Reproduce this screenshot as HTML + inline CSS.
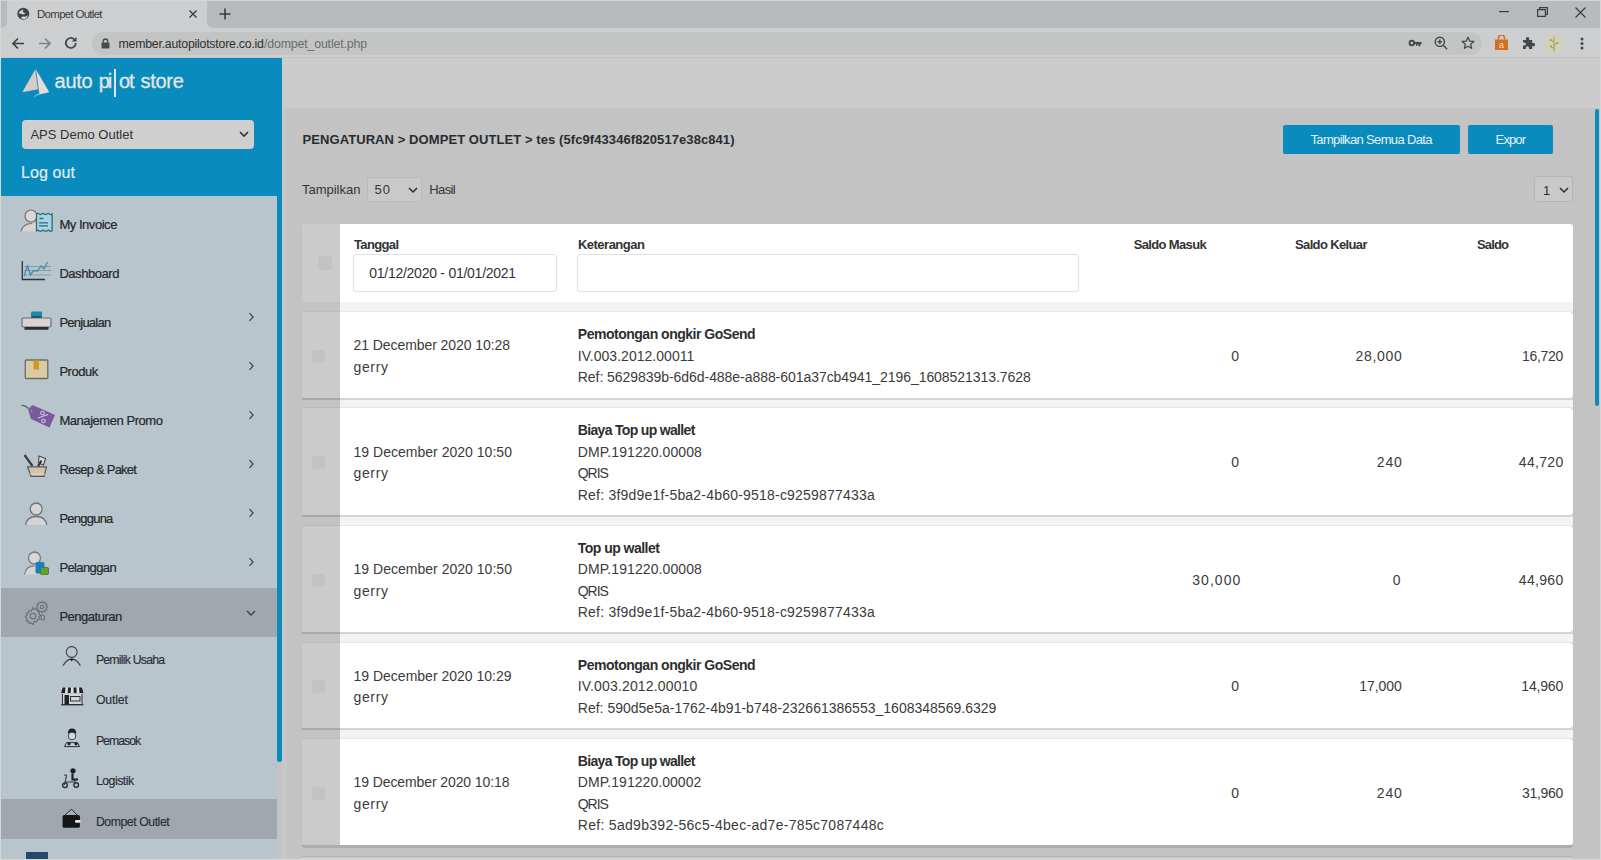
<!DOCTYPE html>
<html><head><meta charset="utf-8">
<style>
*{margin:0;padding:0;box-sizing:border-box}
html,body{width:1601px;height:860px;overflow:hidden;background:#c3c3c3;font-family:"Liberation Sans",sans-serif;color:#333;position:relative}
.a{position:absolute;display:block}
.t{position:absolute;white-space:nowrap}
</style></head><body>
<div class="a" style="left:0px;top:0px;width:1601px;height:860px;background:#c3c3c3;"></div>
<div class="a" style="left:0px;top:0px;width:1601px;height:58px;background:#cdcecf;"></div>
<div class="a" style="left:1px;top:1px;width:6px;height:27px;background:#b9babd;border-radius:0 0 6px 0"></div>
<div class="a" style="left:207px;top:1px;width:1394px;height:27px;background:#b9babd;border-radius:0 0 0 6px"></div>
<div class="a" style="left:0px;top:0px;width:1601px;height:1px;background:#d3d4d6;"></div>
<div class="a" style="left:92px;top:31.5px;width:1390px;height:23.5px;background:#c3c5c5;border-radius:12px"></div>
<div class="a" style="left:0px;top:57px;width:1601px;height:1px;background:#bfc1c1;"></div>
<div class="a" style="left:0px;top:57px;width:1601px;height:1px;background:#c4c5c7;"></div>
<svg class="a" style="left:16px;top:7px;" width="14" height="14" viewBox="0 0 14 14"><circle cx="7.3" cy="6.8" r="6" fill="#404346"/><path d="M2.6 6.6Q3.6 3.4 7.6 2.6L6.6 5Q8.6 5.8 9.6 6.6L7.2 7.6Q4.8 6.4 2.6 6.6z" fill="#d2d4d6"/><path d="M4.8 10.8Q7 8.6 9.2 9.8L11.9 8.3Q11.6 11 8.6 12Q6.2 12.3 4.8 10.8z" fill="#d2d4d6"/></svg>
<div class="t" style="top:8.57px;font-size:11.5px;line-height:11.5px;color:#3a3b3d;letter-spacing:-0.718px;left:37.00px;">Dompet Outlet</div>
<svg class="a" style="left:188px;top:9px;" width="10" height="10" viewBox="0 0 10 10"><path d="M1.5 1.5l7 7M8.5 1.5l-7 7" stroke="#3a3b3d" stroke-width="1.4"/></svg>
<svg class="a" style="left:219px;top:8px;" width="12" height="12" viewBox="0 0 12 12"><path d="M6 0.5v11M0.5 6h11" stroke="#3a3b3d" stroke-width="1.6"/></svg>
<svg class="a" style="left:1499px;top:11px;" width="10" height="2" viewBox="0 0 10 2"><rect width="10" height="1.2" fill="#3a3b3d"/></svg>
<svg class="a" style="left:1537px;top:7px;" width="11" height="10" viewBox="0 0 11 10"><path d="M0.6 2.6h7.8v6.8H0.6z M2.6 2.6V0.6h7.8v6.8H8.4" stroke="#3a3b3d" stroke-width="1.2" fill="none"/></svg>
<svg class="a" style="left:1575px;top:7px;" width="11" height="11" viewBox="0 0 11 11"><path d="M0.5 0.5l10 10M10.5 0.5l-10 10" stroke="#3a3b3d" stroke-width="1.2"/></svg>
<svg class="a" style="left:11px;top:37px;" width="14" height="13" viewBox="0 0 14 13"><path d="M13 6.5H2.5M7 1.5L2 6.5l5 5" stroke="#3e4043" stroke-width="1.7" fill="none"/></svg>
<svg class="a" style="left:38px;top:37px;" width="14" height="13" viewBox="0 0 14 13"><path d="M1 6.5h10.5M7 1.5l5 5-5 5" stroke="#808285" stroke-width="1.7" fill="none"/></svg>
<svg class="a" style="left:64px;top:36px;" width="14" height="14" viewBox="0 0 14 14"><path d="M11.8 7a5 5 0 1 1-1.5-3.6" stroke="#3e4043" stroke-width="1.7" fill="none"/><path d="M12.5 1v4.6H7.9z" fill="#3e4043"/></svg>
<svg class="a" style="left:101px;top:38px;" width="9" height="11" viewBox="0 0 9 11"><rect x="0.5" y="4.5" width="8" height="6" rx="1" fill="#47494c"/><path d="M2.3 4.8V3.2a2.2 2.2 0 0 1 4.4 0v1.6" stroke="#47494c" stroke-width="1.3" fill="none"/></svg>
<div class="t" style="top:37.59px;font-size:12.3px;line-height:12.3px;color:#2d2e30;letter-spacing:-0.216px;left:118.50px;">member.autopilotstore.co.id</div>
<div class="t" style="top:37.59px;font-size:12.3px;line-height:12.3px;color:#6a6c6f;letter-spacing:-0.135px;left:264.00px;">/dompet_outlet.php</div>
<svg class="a" style="left:1408px;top:38px;" width="14" height="10" viewBox="0 0 14 10"><circle cx="3.8" cy="5" r="3.2" fill="#45474a"/><circle cx="3.8" cy="5" r="1.2" fill="#cdcecf"/><path d="M6 4h7.5v2.2h-1.2v2h-1.8v-2h-1v1.5H8V6H6z" fill="#45474a"/></svg>
<svg class="a" style="left:1434px;top:36px;" width="14" height="14" viewBox="0 0 14 14"><circle cx="5.8" cy="5.8" r="4.6" stroke="#45474a" stroke-width="1.4" fill="none"/><path d="M9.2 9.2l4 4M5.8 3.5v4.6M3.5 5.8h4.6" stroke="#45474a" stroke-width="1.4"/></svg>
<svg class="a" style="left:1461px;top:36px;" width="14" height="14" viewBox="0 0 14 14"><path d="M7 1.3l1.7 3.8 4.1.4-3.1 2.7.9 4.1L7 10.2l-3.6 2.1.9-4.1L1.2 5.5l4.1-.4z" stroke="#45474a" stroke-width="1.3" fill="none" stroke-linejoin="round"/></svg>
<svg class="a" style="left:1494px;top:35px;" width="15" height="16" viewBox="0 0 15 16"><path d="M1 4.5h13v10.5H1z" fill="#d2711d"/><path d="M4.5 4.5V3a3 3 0 0 1 6 0v1.5" stroke="#d2711d" stroke-width="1.5" fill="none"/><text x="7.5" y="12.8" font-family="Liberation Sans" font-size="9" fill="#f1e0cf" text-anchor="middle">a</text></svg>
<svg class="a" style="left:1521px;top:36px;" width="14" height="14" viewBox="0 0 14 14"><path d="M2 4h3V2.6a1.6 1.6 0 0 1 3.2 0V4h3v3h1.3a1.6 1.6 0 0 1 0 3.2H11.2V13H8v-1.2a1.6 1.6 0 0 0-3.2 0V13H2V9.6h1.2a1.6 1.6 0 0 0 0-3.2H2z" fill="#45474a"/></svg>
<svg class="a" style="left:1544px;top:34px;" width="20" height="20" viewBox="0 0 20 20"><circle cx="10" cy="10" r="9.5" fill="#d3d2b8"/><path d="M10 2.5v15M6.5 6l3.5 2M13.5 9l-3.5 2M7 12.5l3 2" stroke="#9a9660" stroke-width="0.9" fill="none"/><circle cx="6.5" cy="6" r="1" fill="#8fa060"/><circle cx="13.5" cy="9" r="1" fill="#8fa060"/><circle cx="7" cy="12.5" r="1" fill="#8fa060"/></svg>
<svg class="a" style="left:1580px;top:37px;" width="4" height="13" viewBox="0 0 4 13"><circle cx="2" cy="2" r="1.5" fill="#45474a"/><circle cx="2" cy="6.5" r="1.5" fill="#45474a"/><circle cx="2" cy="11" r="1.5" fill="#45474a"/></svg>
<div class="a" style="left:0px;top:58px;width:282px;height:138px;background:#0a8bbd;"></div>
<div class="a" style="left:0px;top:196px;width:277px;height:664px;background:#b9c5cc;"></div>
<div class="a" style="left:277px;top:196px;width:5px;height:664px;background:#c4c4c4;"></div>
<div class="a" style="left:277px;top:108px;width:5px;height:654px;background:#0a8bbd;border-radius:0 0 3px 3px"></div>
<svg class="a" style="left:20px;top:67px;" width="32" height="32" viewBox="0 0 32 32"><path d="M15.6 1.7L2.3 25.2 18.3 22.3z" fill="#d6cdc6"/><path d="M15.6 1.7L29.3 25.2 19 27.6z" fill="#e2ddd8"/><path d="M15.6 1.7l3.4 25.9" stroke="#0a8bbd" stroke-width="0.8"/><path d="M14.5 29.5l2.5-1.8 2.2-.2" stroke="#9fd2e4" stroke-width="1" fill="none"/></svg>
<div class="t" style="top:70.67px;font-size:20px;line-height:20px;color:#e3e6e4;letter-spacing:-0.300px;left:54.60px;-webkit-text-stroke:0.3px #e3e6e4;">auto</div>
<div class="t" style="top:70.67px;font-size:20px;line-height:20px;color:#e3e6e4;letter-spacing:-2.100px;left:98.80px;-webkit-text-stroke:0.3px #e3e6e4;">pi</div>
<div class="a" style="left:114px;top:69px;width:2px;height:28px;background:#dfe6e6;"></div>
<div class="t" style="top:70.67px;font-size:20px;line-height:20px;color:#e3e6e4;letter-spacing:-1.200px;left:119.00px;-webkit-text-stroke:0.3px #e3e6e4;">ot</div>
<div class="t" style="top:70.67px;font-size:20px;line-height:20px;color:#e3e6e4;letter-spacing:-0.250px;left:140.40px;-webkit-text-stroke:0.3px #e3e6e4;">store</div>
<div class="a" style="left:22px;top:120px;width:232px;height:29px;background:#cfcfcf;border-radius:4px"></div>
<div class="t" style="top:128.30px;font-size:13px;line-height:13px;color:#2f3133;letter-spacing:0.002px;left:30.40px;">APS Demo Outlet</div>
<svg class="a" style="left:239px;top:131px;" width="10" height="7" viewBox="0 0 10 7"><path d="M1 1l4 4 4-4" stroke="#2f3133" stroke-width="1.6" fill="none"/></svg>
<div class="t" style="top:165.16px;font-size:16px;line-height:16px;color:#e0ecf0;letter-spacing:0.107px;left:21.00px;-webkit-text-stroke:0.2px #e0ecf0;">Log out</div>
<div class="a" style="left:0px;top:588px;width:277px;height:49px;background:#a1a8ad;"></div>
<div class="t" style="top:218.30px;font-size:13px;line-height:13px;color:#23272b;letter-spacing:-0.460px;left:59.40px;-webkit-text-stroke:0.2px #23272b;">My Invoice</div>
<div class="t" style="top:267.30px;font-size:13px;line-height:13px;color:#23272b;letter-spacing:-0.446px;left:59.40px;-webkit-text-stroke:0.2px #23272b;">Dashboard</div>
<div class="t" style="top:316.30px;font-size:13px;line-height:13px;color:#23272b;letter-spacing:-0.756px;left:59.40px;-webkit-text-stroke:0.2px #23272b;">Penjualan</div>
<svg class="a" style="left:247px;top:312px;" width="8" height="10" viewBox="0 0 8 10"><path d="M2.5 1.2l3.6 3.8-3.6 3.8" stroke="#3a3e42" stroke-width="1.15" fill="none"/></svg>
<div class="t" style="top:365.30px;font-size:13px;line-height:13px;color:#23272b;letter-spacing:-0.455px;left:59.40px;-webkit-text-stroke:0.2px #23272b;">Produk</div>
<svg class="a" style="left:247px;top:361px;" width="8" height="10" viewBox="0 0 8 10"><path d="M2.5 1.2l3.6 3.8-3.6 3.8" stroke="#3a3e42" stroke-width="1.15" fill="none"/></svg>
<div class="t" style="top:414.30px;font-size:13px;line-height:13px;color:#23272b;letter-spacing:-0.446px;left:59.40px;-webkit-text-stroke:0.2px #23272b;">Manajemen Promo</div>
<svg class="a" style="left:247px;top:410px;" width="8" height="10" viewBox="0 0 8 10"><path d="M2.5 1.2l3.6 3.8-3.6 3.8" stroke="#3a3e42" stroke-width="1.15" fill="none"/></svg>
<div class="t" style="top:463.30px;font-size:13px;line-height:13px;color:#23272b;letter-spacing:-0.767px;left:59.40px;-webkit-text-stroke:0.2px #23272b;">Resep &amp; Paket</div>
<svg class="a" style="left:247px;top:459px;" width="8" height="10" viewBox="0 0 8 10"><path d="M2.5 1.2l3.6 3.8-3.6 3.8" stroke="#3a3e42" stroke-width="1.15" fill="none"/></svg>
<div class="t" style="top:512.30px;font-size:13px;line-height:13px;color:#23272b;letter-spacing:-0.764px;left:59.40px;-webkit-text-stroke:0.2px #23272b;">Pengguna</div>
<svg class="a" style="left:247px;top:508px;" width="8" height="10" viewBox="0 0 8 10"><path d="M2.5 1.2l3.6 3.8-3.6 3.8" stroke="#3a3e42" stroke-width="1.15" fill="none"/></svg>
<div class="t" style="top:561.30px;font-size:13px;line-height:13px;color:#23272b;letter-spacing:-0.617px;left:59.40px;-webkit-text-stroke:0.2px #23272b;">Pelanggan</div>
<svg class="a" style="left:247px;top:557px;" width="8" height="10" viewBox="0 0 8 10"><path d="M2.5 1.2l3.6 3.8-3.6 3.8" stroke="#3a3e42" stroke-width="1.15" fill="none"/></svg>
<div class="t" style="top:610.30px;font-size:13px;line-height:13px;color:#23272b;letter-spacing:-0.490px;left:59.40px;-webkit-text-stroke:0.2px #23272b;">Pengaturan</div>
<svg class="a" style="left:246px;top:609px;" width="10" height="8" viewBox="0 0 10 8"><path d="M1 2l4 4 4-4" stroke="#3a3e42" stroke-width="1.3" fill="none"/></svg>
<div class="a" style="left:0px;top:799px;width:277px;height:40px;background:#a1a8ad;"></div>
<div class="t" style="top:653.59px;font-size:12.3px;line-height:12.3px;color:#2a2e33;letter-spacing:-0.780px;left:95.90px;-webkit-text-stroke:0.15px #2a2e33;">Pemilik Usaha</div>
<div class="t" style="top:693.89px;font-size:12.3px;line-height:12.3px;color:#2a2e33;letter-spacing:-0.148px;left:95.90px;-webkit-text-stroke:0.15px #2a2e33;">Outlet</div>
<div class="t" style="top:734.59px;font-size:12.3px;line-height:12.3px;color:#2a2e33;letter-spacing:-0.992px;left:95.90px;-webkit-text-stroke:0.15px #2a2e33;">Pemasok</div>
<div class="t" style="top:774.79px;font-size:12.3px;line-height:12.3px;color:#2a2e33;letter-spacing:-0.494px;left:95.90px;-webkit-text-stroke:0.15px #2a2e33;">Logistik</div>
<div class="t" style="top:815.59px;font-size:12.3px;line-height:12.3px;color:#2a2e33;letter-spacing:-0.456px;left:95.90px;-webkit-text-stroke:0.15px #2a2e33;">Dompet Outlet</div>
<div class="a" style="left:26px;top:852px;width:22px;height:8px;background:#24476a;"></div>
<svg class="a" style="left:16px;top:204px;" width="40" height="32" viewBox="0 0 40 32"><circle cx="15" cy="12" r="6" fill="#dcd6d4" stroke="#777" stroke-width="1.2"/><path d="M5 27.5Q7 19.5 16 19.5h4.5V27.5z" fill="#d8d4d2"/><path d="M5 27.5Q7 19.5 16 19.5" stroke="#777" stroke-width="1.2" fill="none"/><path d="M20.5 10q1.3-1.2 2.6 0t2.6 0 2.6 0 2.6 0 2.6 0 2.6 0V26.8q-1.3 1.2-2.6 0t-2.6 0-2.6 0-2.6 0-2.6 0-2.6 0z" fill="#a9d3e2" stroke="#2f6a7b" stroke-width="1.3"/><path d="M23.5 14.5h4M23 18.8h9M23 21.8h9" stroke="#2f6a7b" stroke-width="1.3"/></svg>
<svg class="a" style="left:16px;top:255px;" width="40" height="32" viewBox="0 0 40 32"><path d="M8 11.5h27M8 15.5h27M8 20h27" stroke="#8a9599" stroke-width="0.9"/><path d="M6.3 6v18.5H29" stroke="#2d3336" stroke-width="1.3" fill="none"/><path d="M8 21l3.5-10 3 9 3-4.5 4 .5 3.5-5 3 3 3.5-7" stroke="#3a90a8" stroke-width="1.3" fill="none"/></svg>
<svg class="a" style="left:16px;top:304px;" width="40" height="32" viewBox="0 0 40 32"><rect x="15" y="7.5" width="11" height="6.5" rx="1" fill="#1a88aa"/><rect x="15.5" y="12.3" width="10" height="1.7" fill="#1f3d48"/><rect x="6" y="14" width="29" height="9" rx="1.5" fill="#d6d5d2" stroke="#6b6e70" stroke-width="1.2"/><rect x="8.5" y="23" width="24" height="2.8" fill="#2c2f31"/></svg>
<svg class="a" style="left:16px;top:353px;" width="40" height="32" viewBox="0 0 40 32"><rect x="9.3" y="7" width="22.5" height="18.5" rx="1" fill="#d9cba6" stroke="#6d6b66" stroke-width="1.3"/><rect x="17.5" y="7.5" width="5.5" height="9" fill="#cf991c"/></svg>
<svg class="a" style="left:16px;top:400px;" width="40" height="32" viewBox="0 0 40 32"><path d="M5.5 5.5q3-.8 7 3" stroke="#555b60" stroke-width="1.1" fill="none"/><path d="M12 9l4.5-4 22.5 10-5.5 12.5L15 19z" fill="#7a5a9c"/><circle cx="26.5" cy="13" r="1.8" stroke="#d8c6ea" stroke-width="1.1" fill="none"/><circle cx="27.5" cy="21" r="1.8" stroke="#d8c6ea" stroke-width="1.1" fill="none"/><path d="M22 18l10-3.5" stroke="#d8c6ea" stroke-width="1.1"/><circle cx="15.5" cy="11" r="0.9" fill="#a98ac8"/></svg>
<svg class="a" style="left:16px;top:449px;" width="40" height="32" viewBox="0 0 40 32"><path d="M8.5 6l8 11" stroke="#3b3f41" stroke-width="2.2"/><path d="M23 7l6.5 2.5-2 6.5-5-2z" fill="#dcdcdc" stroke="#44484a" stroke-width="1.1"/><path d="M25.5 11.5l-3.5 6" stroke="#2a2d2f" stroke-width="2"/><path d="M11.5 17.8h19l-2.5 9.5H15z" fill="#dcc0a6" stroke="#55595b" stroke-width="1.2"/><path d="M14.5 25h14" stroke="#d8d8d4" stroke-width="1.5"/></svg>
<svg class="a" style="left:16px;top:498px;" width="40" height="32" viewBox="0 0 40 32"><circle cx="20.2" cy="11" r="6" fill="#d6d6d8" stroke="#6e7376" stroke-width="1.3"/><path d="M9.5 27q1.5-8.5 10.7-8.5t10.6 8.5z" fill="#d4d4d6"/><path d="M9.5 27q1.5-8.5 10.7-8.5t10.6 8.5" stroke="#6e7376" stroke-width="1.3" fill="none"/></svg>
<svg class="a" style="left:16px;top:547px;" width="40" height="32" viewBox="0 0 40 32"><circle cx="18.5" cy="11" r="6" fill="#d7d6d8" stroke="#787b7e" stroke-width="1.3"/><path d="M8.5 27.5q1.5-8.5 10-8.5" stroke="#787b7e" stroke-width="1.3" fill="none"/><path d="M9 27.5q1.5-8 10-8h2v8z" fill="#d5d4d6"/><rect x="19.5" y="15" width="9" height="11.5" rx="1.5" fill="#1a7fc0"/><rect x="24.5" y="20.5" width="8" height="7" rx="1" fill="#5fa624" stroke="#4b6b3a" stroke-width="0.8"/></svg>
<svg class="a" style="left:16px;top:596px;" width="40" height="32" viewBox="0 0 40 32"><g fill="none" stroke="#6a6f73" stroke-width="1.1"><path d="M17 11.5l1.5 1.8 2.2-.7.6 2.2 2.2.6-.6 2.2 1.7 1.6-1.7 1.6.6 2.2-2.2.6-.6 2.2-2.2-.7L17 28.5l-1.6-1.6-2.2.7-.6-2.2-2.2-.6.6-2.2-1.7-1.6 1.7-1.6-.6-2.2 2.2-.6.6-2.2 2.2.7z"/><circle cx="17" cy="20" r="2.8"/><path d="M26 5.5l1.2 1.2 1.6-.5.4 1.6 1.6.4-.5 1.6 1.2 1.2-1.2 1.2.5 1.6-1.6.4-.4 1.6-1.6-.5L26 16.5l-1.2-1.2-1.6.5-.4-1.6-1.6-.4.5-1.6-1.2-1.2 1.2-1.2-.5-1.6 1.6-.4.4-1.6 1.6.5z"/><circle cx="26" cy="11" r="1.8"/><rect x="25" y="19" width="3.5" height="5" rx="1.7"/></g></svg>
<svg class="a" style="left:56px;top:640px;" width="30" height="30" viewBox="0 0 30 30"><circle cx="15.7" cy="12" r="5.4" fill="none" stroke="#3d4144" stroke-width="1.1"/><path d="M7 25.6Q11 18.8 15.7 18.8T24.4 25.6" fill="none" stroke="#3d4144" stroke-width="1.2"/><path d="M14 19l1.7 2.5 1.7-2.5z" fill="#15181a"/></svg>
<svg class="a" style="left:56px;top:684px;" width="30" height="24" viewBox="0 0 30 24"><path d="M5.5 3.5h21l1 5.5h-23z" fill="#e0e0e0"/><path d="M6.5 3.5h3l-.5 5.5h-4zM12 3.5h3l-.3 5.5h-3zM17.5 3.5h3l.2 5.5h-3zM23 3.5h3l1.5 5.5h-4z" fill="#202325"/><path d="M6.5 10v10.5h19.5V10" fill="#d4d6d8" stroke="#2e3134" stroke-width="1"/><rect x="8.5" y="11" width="4.5" height="9.5" fill="#202325"/><rect x="14.5" y="12.5" width="9.5" height="4.5" fill="none" stroke="#2e3134" stroke-width="1"/><path d="M5 20.8h22.5" stroke="#2e3134" stroke-width="1.2"/></svg>
<svg class="a" style="left:56px;top:725px;" width="30" height="30" viewBox="0 0 30 30"><path d="M11.9 8.5q0-5 4.1-5t4.3 5z" fill="#1f2326"/><circle cx="16" cy="11" r="3.8" fill="#d4dade" stroke="#40464a" stroke-width="1"/><path d="M8.5 21.6l2-4h11l2 4z" fill="#c8ced2" stroke="#2a2e31" stroke-width="1"/><circle cx="13" cy="18.8" r="1.6" fill="#1f2326"/><circle cx="20" cy="18.8" r="1.6" fill="#1f2326"/></svg>
<svg class="a" style="left:56px;top:765px;" width="30" height="30" viewBox="0 0 30 30"><circle cx="17" cy="5.8" r="2.6" fill="#1d2124"/><path d="M16.5 8.5v6h5.5" stroke="#1d2124" stroke-width="2.2" fill="none"/><path d="M8 10l3 .3M10.5 10.5l-2 9.5M9 17h9.5l2-3.5" stroke="#35393c" stroke-width="1.1" fill="none"/><circle cx="9" cy="20.2" r="2.3" fill="none" stroke="#2a2e31" stroke-width="1.4"/><circle cx="20.2" cy="20" r="2.3" fill="none" stroke="#2a2e31" stroke-width="1.4"/></svg>
<svg class="a" style="left:56px;top:805px;" width="30" height="30" viewBox="0 0 30 30"><path d="M9 10l6.5-5.8 5.5 5.8" stroke="#2a2e31" stroke-width="1" fill="#a8aeb3"/><rect x="6.6" y="10" width="17.3" height="12.8" rx="1.6" fill="#151515"/><rect x="19" y="15" width="5.5" height="2.8" rx="1" fill="#e8e6e2"/></svg>
<div class="a" style="left:282px;top:58px;width:1319px;height:50px;background:#cccccc;"></div>
<div class="a" style="left:1592px;top:108px;width:9px;height:752px;background:#c3c3c3;"></div>
<div class="a" style="left:282px;top:108px;width:5px;height:752px;background:#c8c8c8;"></div>
<div class="a" style="left:1595px;top:109px;width:4px;height:297px;background:#0a8bbd;border-radius:2px"></div>
<div class="t" style="top:133.00px;font-size:13px;line-height:13px;color:#2a2c2e;font-weight:bold;letter-spacing:0.078px;left:302.50px;">PENGATURAN &gt; DOMPET OUTLET &gt; tes (5fc9f43346f820517e38c841)</div>
<div class="a" style="left:1283px;top:125px;width:177px;height:29px;background:#0a8bbd;border-radius:2px"></div>
<div class="t" style="top:133.00px;font-size:13px;line-height:13px;color:#e6f1f5;letter-spacing:-0.657px;left:1310.50px;">Tampilkan Semua Data</div>
<div class="a" style="left:1468px;top:125px;width:85px;height:29px;background:#0a8bbd;border-radius:2px"></div>
<div class="t" style="top:133.00px;font-size:13px;line-height:13px;color:#e6f1f5;letter-spacing:-0.883px;left:1495.60px;">Expor</div>
<div class="t" style="top:183.00px;font-size:13px;line-height:13px;color:#353535;letter-spacing:-0.013px;left:302.00px;">Tampilkan</div>
<div class="a" style="left:367px;top:177px;width:55px;height:25px;background:#c9c9c9;border:1px solid #bababa;border-radius:3px"></div>
<div class="t" style="top:183.00px;font-size:13px;line-height:13px;color:#353535;letter-spacing:0.970px;left:374.60px;">50</div>
<svg class="a" style="left:408px;top:187px;" width="10" height="7" viewBox="0 0 10 7"><path d="M1 1l4 4 4-4" stroke="#2a2c2e" stroke-width="1.5" fill="none"/></svg>
<div class="t" style="top:183.00px;font-size:13px;line-height:13px;color:#353535;letter-spacing:-0.581px;left:429.20px;">Hasil</div>
<div class="a" style="left:1534px;top:176px;width:39px;height:26px;background:#c9c9c9;border:1px solid #b5b5b5;border-radius:3px"></div>
<div class="t" style="top:184.00px;font-size:13px;line-height:13px;color:#2a2c2e;left:1543.00px;">1</div>
<svg class="a" style="left:1559px;top:187px;" width="10" height="7" viewBox="0 0 10 7"><path d="M1 1l4 4 4-4" stroke="#2a2c2e" stroke-width="1.5" fill="none"/></svg>
<div class="a" style="left:302px;top:224px;width:1271px;height:78px;background:#ffffff;border-radius:3px 3px 0 0"></div>
<div class="a" style="left:302px;top:224px;width:38px;height:78px;background:#cbcbcb;border-radius:3px 0 0 0"></div>
<div class="a" style="left:318px;top:256px;width:14px;height:14px;background:#c3c3c3;border-radius:2px"></div>
<div class="t" style="top:237.60px;font-size:13px;line-height:13px;color:#333;font-weight:bold;letter-spacing:-0.647px;left:354.00px;">Tanggal</div>
<div class="t" style="top:237.60px;font-size:13px;line-height:13px;color:#333;font-weight:bold;letter-spacing:-0.500px;left:577.90px;">Keterangan</div>
<div class="t" style="top:237.60px;font-size:13px;line-height:13px;color:#333;font-weight:bold;letter-spacing:-0.650px;left:1133.75px;">Saldo Masuk</div>
<div class="t" style="top:237.60px;font-size:13px;line-height:13px;color:#333;font-weight:bold;letter-spacing:-0.636px;left:1295.00px;">Saldo Keluar</div>
<div class="t" style="top:237.60px;font-size:13px;line-height:13px;color:#333;font-weight:bold;letter-spacing:-0.856px;left:1477.00px;">Saldo</div>
<div class="a" style="left:353px;top:254px;width:204px;height:38px;background:#fff;border:1px solid #e0e0e0;border-radius:3px"></div>
<div class="t" style="top:266.15px;font-size:14px;line-height:14px;color:#333;letter-spacing:-0.255px;left:369.20px;">01/12/2020 - 01/01/2021</div>
<div class="a" style="left:577px;top:254px;width:502px;height:38px;background:#fff;border:1px solid #e0e0e0;border-radius:3px"></div>
<div class="a" style="left:302px;top:302px;width:38px;height:10px;background:#c3c3c3;"></div>
<div class="a" style="left:340px;top:302px;width:1233px;height:10px;background:#f3f3f3;"></div>
<div class="a" style="left:302px;top:311px;width:38px;height:1px;background:#bdbdbd;"></div>
<div class="a" style="left:340px;top:311px;width:1233px;height:1px;background:#ebebeb;"></div>
<div class="a" style="left:340px;top:312px;width:1233px;height:86px;background:#ffffff;border-radius:0 3px 3px 0"></div>
<div class="a" style="left:302px;top:312px;width:38px;height:86px;background:#cbcbcb;border-radius:3px 0 0 3px"></div>
<div class="a" style="left:302px;top:398px;width:38px;height:2px;background:#a9a9a9;"></div>
<div class="a" style="left:340px;top:398px;width:1233px;height:2px;background:#d4d4d4;"></div>
<div class="a" style="left:302px;top:400px;width:38px;height:7px;background:#c3c3c3;"></div>
<div class="a" style="left:340px;top:400px;width:1233px;height:7px;background:#f3f3f3;"></div>
<div class="a" style="left:302px;top:407px;width:38px;height:1px;background:#bababa;"></div>
<div class="a" style="left:340px;top:407px;width:1233px;height:1px;background:#e6e6e6;"></div>
<div class="a" style="left:312px;top:350px;width:13px;height:13px;background:#c3c3c3;border-radius:2px"></div>
<div class="t" style="top:338.20px;font-size:14px;line-height:14px;color:#3b3b3b;letter-spacing:-0.071px;left:353.50px;">21 December 2020 10:28</div>
<div class="t" style="top:359.70px;font-size:14px;line-height:14px;color:#3b3b3b;letter-spacing:0.645px;left:353.50px;">gerry</div>
<div class="t" style="top:327.45px;font-size:14px;line-height:14px;color:#2e2e2e;font-weight:bold;letter-spacing:-0.487px;left:577.80px;">Pemotongan ongkir GoSend</div>
<div class="t" style="top:348.95px;font-size:14px;line-height:14px;color:#3b3b3b;letter-spacing:0.032px;left:577.80px;">IV.003.2012.00011</div>
<div class="t" style="top:370.45px;font-size:14px;line-height:14px;color:#3b3b3b;letter-spacing:-0.052px;left:577.80px;">Ref: 5629839b-6d6d-488e-a888-601a37cb4941_2196_1608521313.7628</div>
<div class="t" style="top:348.95px;font-size:14px;line-height:14px;color:#3b3b3b;letter-spacing:1.230px;left:1231.30px;">0</div>
<div class="t" style="top:348.95px;font-size:14px;line-height:14px;color:#3b3b3b;letter-spacing:0.682px;left:1355.55px;">28,000</div>
<div class="t" style="top:348.95px;font-size:14px;line-height:14px;color:#3b3b3b;letter-spacing:-0.318px;left:1522.05px;">16,720</div>
<div class="a" style="left:340px;top:408px;width:1233px;height:107px;background:#ffffff;border-radius:0 3px 3px 0"></div>
<div class="a" style="left:302px;top:408px;width:38px;height:107px;background:#cbcbcb;border-radius:3px 0 0 3px"></div>
<div class="a" style="left:302px;top:515px;width:38px;height:2px;background:#a9a9a9;"></div>
<div class="a" style="left:340px;top:515px;width:1233px;height:2px;background:#d4d4d4;"></div>
<div class="a" style="left:302px;top:517px;width:38px;height:8px;background:#c3c3c3;"></div>
<div class="a" style="left:340px;top:517px;width:1233px;height:8px;background:#f3f3f3;"></div>
<div class="a" style="left:302px;top:525px;width:38px;height:1px;background:#bababa;"></div>
<div class="a" style="left:340px;top:525px;width:1233px;height:1px;background:#e6e6e6;"></div>
<div class="a" style="left:312px;top:456px;width:13px;height:13px;background:#c3c3c3;border-radius:2px"></div>
<div class="t" style="top:444.70px;font-size:14px;line-height:14px;color:#3b3b3b;letter-spacing:0.020px;left:353.50px;">19 December 2020 10:50</div>
<div class="t" style="top:466.20px;font-size:14px;line-height:14px;color:#3b3b3b;letter-spacing:0.645px;left:353.50px;">gerry</div>
<div class="t" style="top:423.20px;font-size:14px;line-height:14px;color:#2e2e2e;font-weight:bold;letter-spacing:-0.674px;left:577.80px;">Biaya Top up wallet</div>
<div class="t" style="top:444.70px;font-size:14px;line-height:14px;color:#3b3b3b;letter-spacing:0.086px;left:577.80px;">DMP.191220.00008</div>
<div class="t" style="top:466.20px;font-size:14px;line-height:14px;color:#3b3b3b;letter-spacing:-1.077px;left:577.80px;">QRIS</div>
<div class="t" style="top:487.70px;font-size:14px;line-height:14px;color:#3b3b3b;letter-spacing:0.205px;left:577.80px;">Ref: 3f9d9e1f-5ba2-4b60-9518-c9259877433a</div>
<div class="t" style="top:455.45px;font-size:14px;line-height:14px;color:#3b3b3b;letter-spacing:1.230px;left:1231.30px;">0</div>
<div class="t" style="top:455.45px;font-size:14px;line-height:14px;color:#3b3b3b;letter-spacing:0.810px;left:1376.80px;">240</div>
<div class="t" style="top:455.45px;font-size:14px;line-height:14px;color:#3b3b3b;letter-spacing:0.332px;left:1518.80px;">44,720</div>
<div class="a" style="left:340px;top:526px;width:1233px;height:106px;background:#ffffff;border-radius:0 3px 3px 0"></div>
<div class="a" style="left:302px;top:526px;width:38px;height:106px;background:#cbcbcb;border-radius:3px 0 0 3px"></div>
<div class="a" style="left:302px;top:632px;width:38px;height:2px;background:#a9a9a9;"></div>
<div class="a" style="left:340px;top:632px;width:1233px;height:2px;background:#d4d4d4;"></div>
<div class="a" style="left:302px;top:634px;width:38px;height:8px;background:#c3c3c3;"></div>
<div class="a" style="left:340px;top:634px;width:1233px;height:8px;background:#f3f3f3;"></div>
<div class="a" style="left:302px;top:642px;width:38px;height:1px;background:#bababa;"></div>
<div class="a" style="left:340px;top:642px;width:1233px;height:1px;background:#e6e6e6;"></div>
<div class="a" style="left:312px;top:574px;width:13px;height:13px;background:#c3c3c3;border-radius:2px"></div>
<div class="t" style="top:562.20px;font-size:14px;line-height:14px;color:#3b3b3b;letter-spacing:0.020px;left:353.50px;">19 December 2020 10:50</div>
<div class="t" style="top:583.70px;font-size:14px;line-height:14px;color:#3b3b3b;letter-spacing:0.645px;left:353.50px;">gerry</div>
<div class="t" style="top:540.70px;font-size:14px;line-height:14px;color:#2e2e2e;font-weight:bold;letter-spacing:-0.534px;left:577.80px;">Top up wallet</div>
<div class="t" style="top:562.20px;font-size:14px;line-height:14px;color:#3b3b3b;letter-spacing:0.086px;left:577.80px;">DMP.191220.00008</div>
<div class="t" style="top:583.70px;font-size:14px;line-height:14px;color:#3b3b3b;letter-spacing:-1.077px;left:577.80px;">QRIS</div>
<div class="t" style="top:605.20px;font-size:14px;line-height:14px;color:#3b3b3b;letter-spacing:0.205px;left:577.80px;">Ref: 3f9d9e1f-5ba2-4b60-9518-c9259877433a</div>
<div class="t" style="top:572.95px;font-size:14px;line-height:14px;color:#3b3b3b;letter-spacing:1.032px;left:1192.30px;">30,000</div>
<div class="t" style="top:572.95px;font-size:14px;line-height:14px;color:#3b3b3b;letter-spacing:1.230px;left:1392.80px;">0</div>
<div class="t" style="top:572.95px;font-size:14px;line-height:14px;color:#3b3b3b;letter-spacing:0.332px;left:1518.80px;">44,960</div>
<div class="a" style="left:340px;top:643px;width:1233px;height:85px;background:#ffffff;border-radius:0 3px 3px 0"></div>
<div class="a" style="left:302px;top:643px;width:38px;height:85px;background:#cbcbcb;border-radius:3px 0 0 3px"></div>
<div class="a" style="left:302px;top:728px;width:38px;height:2px;background:#a9a9a9;"></div>
<div class="a" style="left:340px;top:728px;width:1233px;height:2px;background:#d4d4d4;"></div>
<div class="a" style="left:302px;top:730px;width:38px;height:8px;background:#c3c3c3;"></div>
<div class="a" style="left:340px;top:730px;width:1233px;height:8px;background:#f3f3f3;"></div>
<div class="a" style="left:302px;top:738px;width:38px;height:1px;background:#bababa;"></div>
<div class="a" style="left:340px;top:738px;width:1233px;height:1px;background:#e6e6e6;"></div>
<div class="a" style="left:312px;top:680px;width:13px;height:13px;background:#c3c3c3;border-radius:2px"></div>
<div class="t" style="top:668.70px;font-size:14px;line-height:14px;color:#3b3b3b;letter-spacing:0.000px;left:353.50px;">19 December 2020 10:29</div>
<div class="t" style="top:690.20px;font-size:14px;line-height:14px;color:#3b3b3b;letter-spacing:0.645px;left:353.50px;">gerry</div>
<div class="t" style="top:657.95px;font-size:14px;line-height:14px;color:#2e2e2e;font-weight:bold;letter-spacing:-0.487px;left:577.80px;">Pemotongan ongkir GoSend</div>
<div class="t" style="top:679.45px;font-size:14px;line-height:14px;color:#3b3b3b;letter-spacing:0.154px;left:577.80px;">IV.003.2012.00010</div>
<div class="t" style="top:700.95px;font-size:14px;line-height:14px;color:#3b3b3b;letter-spacing:0.008px;left:577.80px;">Ref: 590d5e5a-1762-4b91-b748-232661386553_1608348569.6329</div>
<div class="t" style="top:679.45px;font-size:14px;line-height:14px;color:#3b3b3b;letter-spacing:1.230px;left:1231.30px;">0</div>
<div class="t" style="top:679.45px;font-size:14px;line-height:14px;color:#3b3b3b;letter-spacing:-0.068px;left:1359.30px;">17,000</div>
<div class="t" style="top:679.45px;font-size:14px;line-height:14px;color:#3b3b3b;letter-spacing:-0.168px;left:1521.30px;">14,960</div>
<div class="a" style="left:340px;top:739px;width:1233px;height:106px;background:#ffffff;border-radius:0 3px 3px 0"></div>
<div class="a" style="left:302px;top:739px;width:38px;height:106px;background:#cbcbcb;border-radius:3px 0 0 3px"></div>
<div class="a" style="left:302px;top:845px;width:38px;height:2px;background:#a9a9a9;"></div>
<div class="a" style="left:340px;top:845px;width:1233px;height:2px;background:#d4d4d4;"></div>
<div class="a" style="left:312px;top:787px;width:13px;height:13px;background:#c3c3c3;border-radius:2px"></div>
<div class="t" style="top:775.20px;font-size:14px;line-height:14px;color:#3b3b3b;letter-spacing:-0.095px;left:353.50px;">19 December 2020 10:18</div>
<div class="t" style="top:796.70px;font-size:14px;line-height:14px;color:#3b3b3b;letter-spacing:0.645px;left:353.50px;">gerry</div>
<div class="t" style="top:753.70px;font-size:14px;line-height:14px;color:#2e2e2e;font-weight:bold;letter-spacing:-0.674px;left:577.80px;">Biaya Top up wallet</div>
<div class="t" style="top:775.20px;font-size:14px;line-height:14px;color:#3b3b3b;letter-spacing:0.053px;left:577.80px;">DMP.191220.00002</div>
<div class="t" style="top:796.70px;font-size:14px;line-height:14px;color:#3b3b3b;letter-spacing:-1.077px;left:577.80px;">QRIS</div>
<div class="t" style="top:818.20px;font-size:14px;line-height:14px;color:#3b3b3b;letter-spacing:0.295px;left:577.80px;">Ref: 5ad9b392-56c5-4bec-ad7e-785c7087448c</div>
<div class="t" style="top:785.95px;font-size:14px;line-height:14px;color:#3b3b3b;letter-spacing:1.230px;left:1231.30px;">0</div>
<div class="t" style="top:785.95px;font-size:14px;line-height:14px;color:#3b3b3b;letter-spacing:0.810px;left:1376.80px;">240</div>
<div class="t" style="top:785.95px;font-size:14px;line-height:14px;color:#3b3b3b;letter-spacing:-0.328px;left:1522.10px;">31,960</div>
<div class="a" style="left:302px;top:845px;width:1271px;height:3px;background:#adadad;border-radius:0 0 3px 3px"></div>
<div class="a" style="left:302px;top:856px;width:1271px;height:1px;background:#b5b5b5;"></div>
<div class="a" style="left:302px;top:857px;width:1271px;height:3px;background:#cbcbcb;"></div>
<div class="a" style="left:0px;top:859px;width:1601px;height:1px;background:#d8d8d8;"></div>
<div class="a" style="left:0px;top:0px;width:1px;height:860px;background:#d6d6d6;"></div>
<div class="a" style="left:1600px;top:0px;width:1px;height:860px;background:#d6d6d6;"></div>
</body></html>
